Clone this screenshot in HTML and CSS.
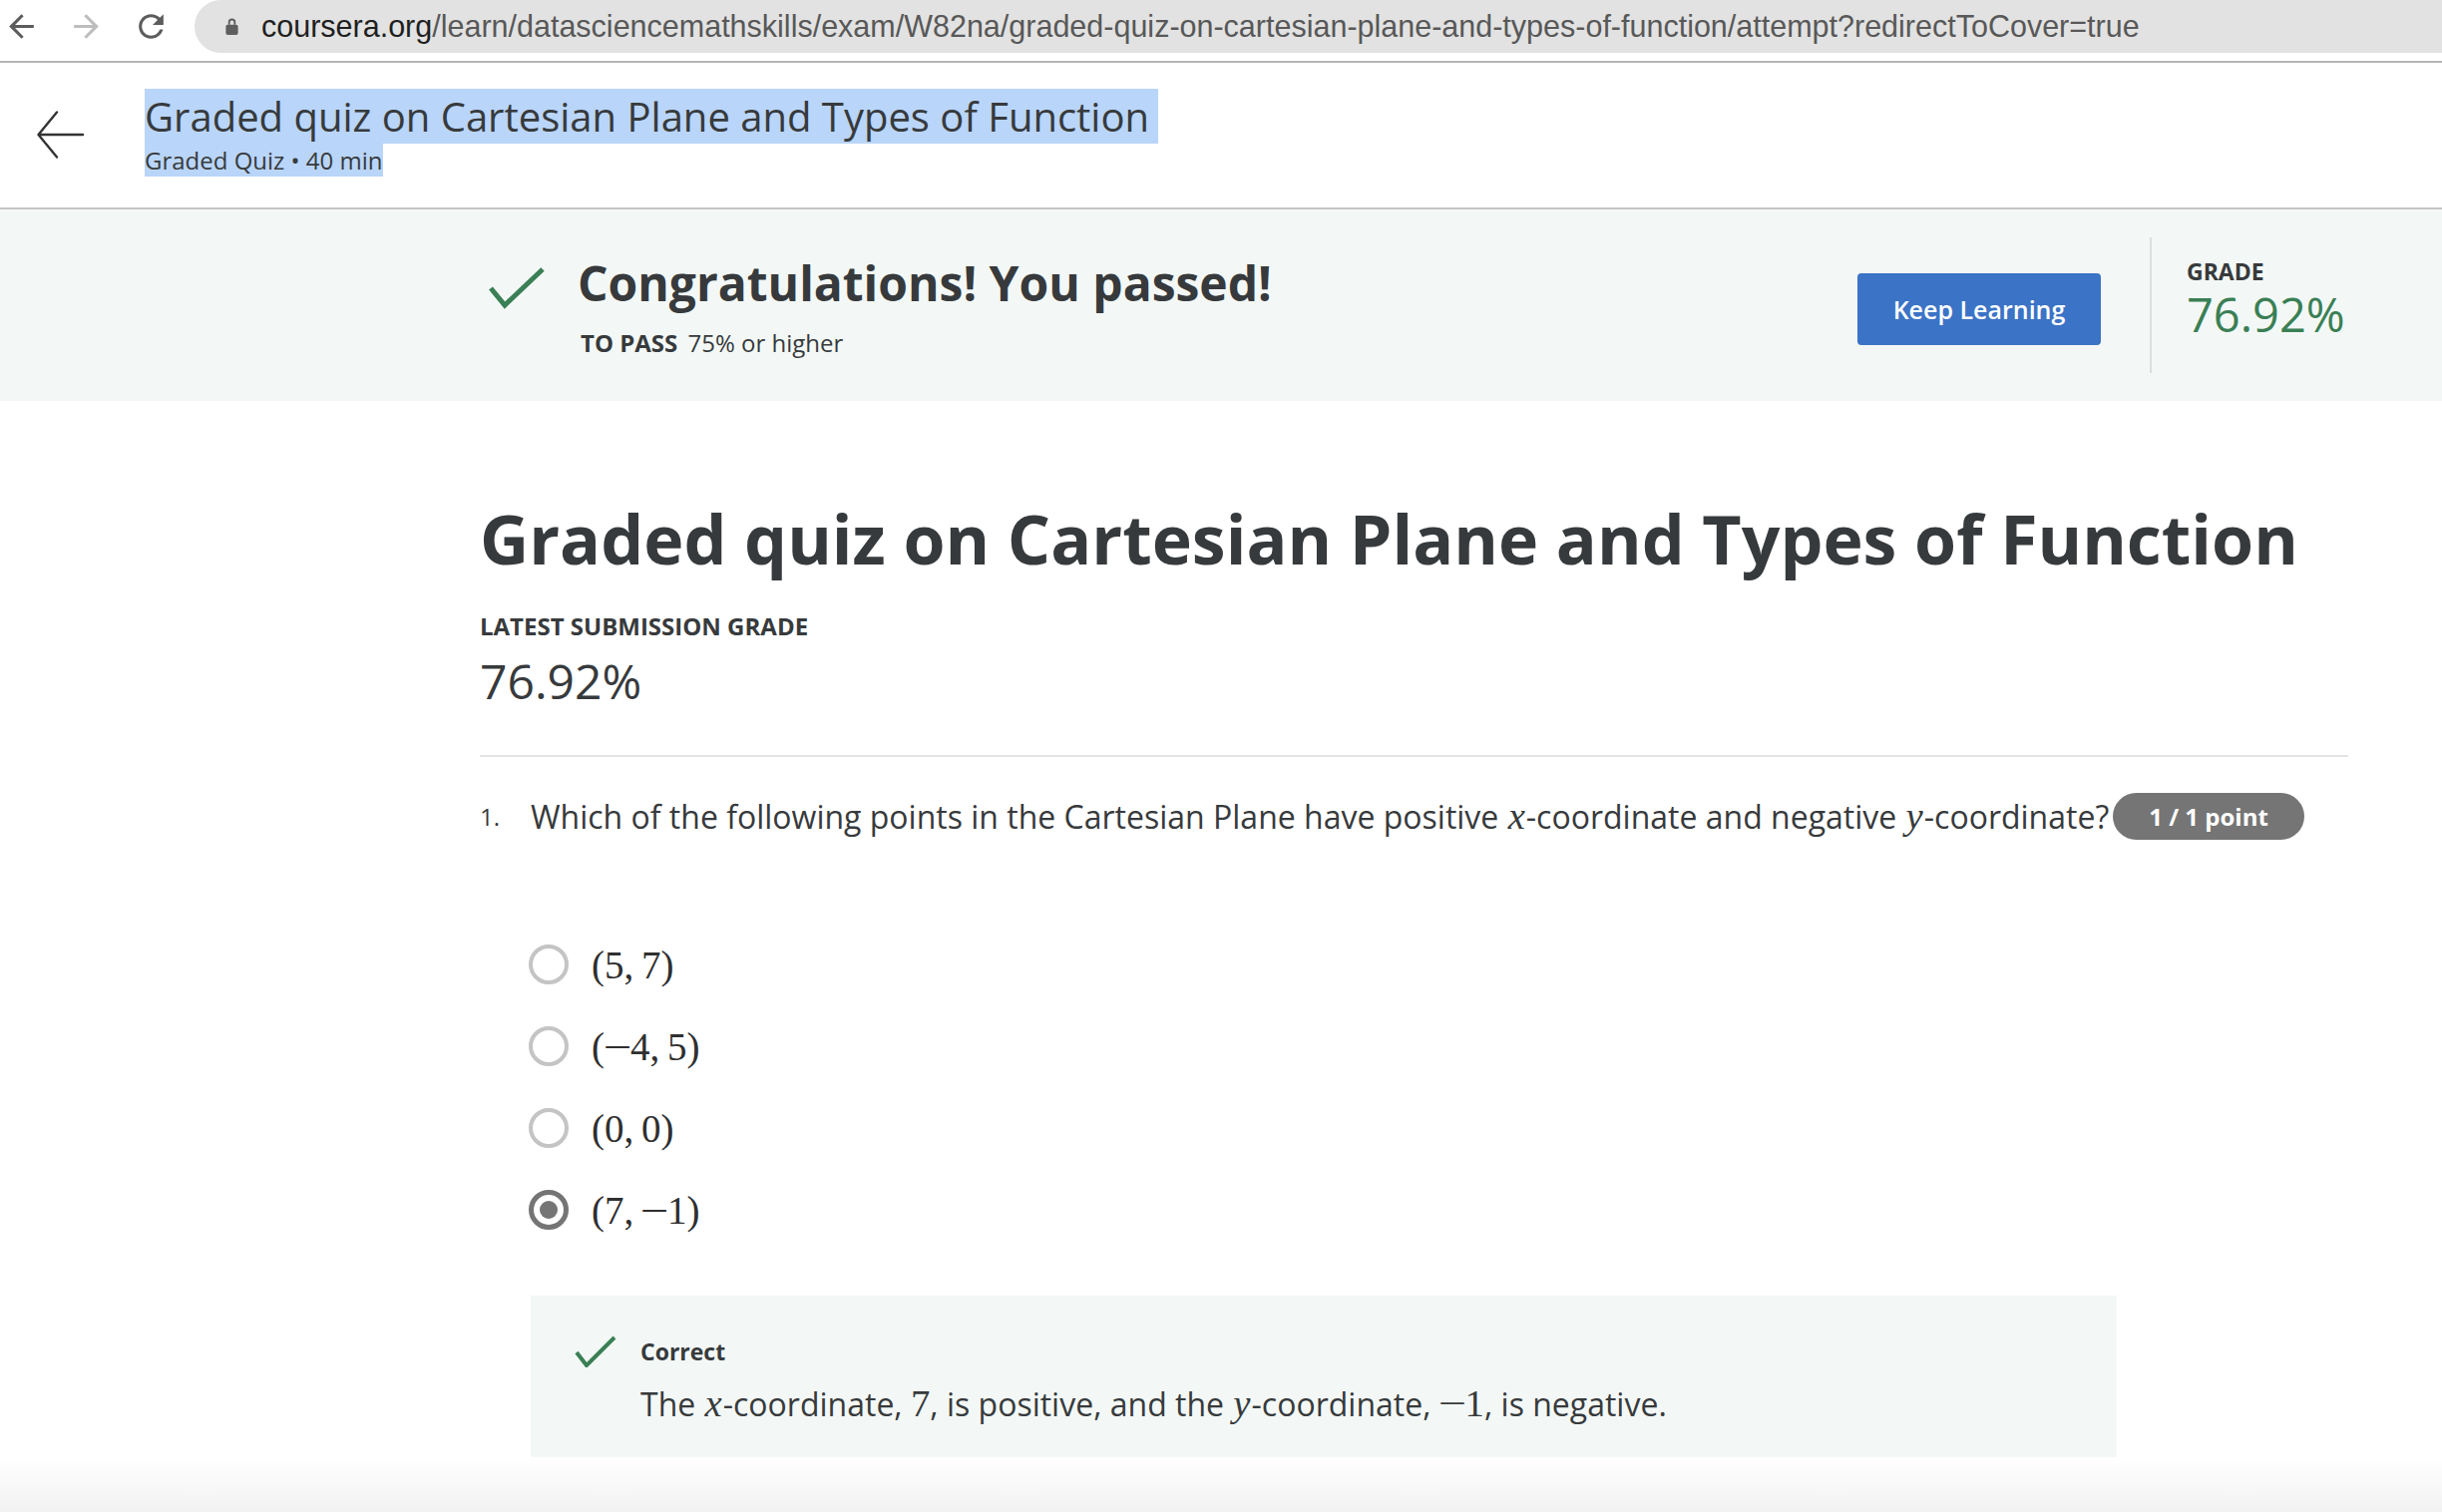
FILE: index.html
```html
<!DOCTYPE html>
<html lang="en">
<head>
<meta charset="utf-8">
<title>Graded quiz on Cartesian Plane and Types of Function | Coursera</title>
<link rel="stylesheet" href="styles.css">
</head>
<body>
<div class="browserbar">
  <div class="nav-icons">
    <svg class="nav-icon dark" viewBox="0 0 24 24"><path d="M20 11H7.83l5.59-5.59L12 4l-8 8 8 8 1.41-1.41L7.83 13H20v-2z"/></svg>
    <svg class="nav-icon light" viewBox="0 0 24 24"><path d="M12 4l-1.41 1.41L16.17 11H4v2h12.17l-5.58 5.59L12 20l8-8z"/></svg>
    <svg class="nav-icon dark" viewBox="0 0 24 24"><path d="M17.65 6.35C16.2 4.9 14.21 4 12 4c-4.42 0-7.99 3.58-7.99 8s3.57 8 7.99 8c3.73 0 6.84-2.55 7.73-6h-2.08c-.82 2.33-3.04 4-5.65 4-3.31 0-6-2.69-6-6s2.69-6 6-6c1.66 0 3.14.69 4.22 1.78L13 11h7V4l-2.35 2.35z"/></svg>
  </div>
  <div class="omnibox">
    <svg class="lock" viewBox="0 0 16 20"><path d="M4 8V5.5a4 4 0 0 1 8 0V8h-2V5.5a2 2 0 0 0-4 0V8z" fill="#5f5f5f"/><rect x="1.5" y="8" width="13" height="11" rx="2" fill="#5f5f5f"/></svg>
    <span class="url"><span class="host">coursera.org</span>/learn/datasciencemathskills/exam/W82na/graded-quiz-on-cartesian-plane-and-types-of-function/attempt?redirectToCover=true</span>
  </div>
</div>

<header class="page-header">
  <svg class="back-arrow" viewBox="0 0 48 48"><path d="M46 24H2M20 1.5L1.5 24 20 46.5" fill="none" stroke="#333" stroke-width="2.4" stroke-linecap="round" stroke-linejoin="round"/></svg>
  <div class="header-text">
    <div class="header-title"><span class="sel sel-title">Graded quiz on Cartesian Plane and Types of Function</span></div>
    <div class="header-sub"><span class="sel">Graded Quiz • 40 min</span></div>
  </div>
</header>

<section class="banner">
  <div class="banner-left">
    <svg class="check-big" viewBox="0 0 58 44"><path d="M3 22L17 39 55 3" fill="none" stroke="#3a7f55" stroke-width="5"/></svg>
    <div class="banner-text">
      <div class="congrats">Congratulations! You passed!</div>
      <div class="topass"><span class="topass-label">TO PASS</span> 75% or higher</div>
    </div>
  </div>
  <button class="keep-btn">Keep Learning</button>
  <div class="banner-divider"></div>
  <div class="grade-col">
    <div class="grade-label">GRADE</div>
    <div class="grade-value">76.92%</div>
  </div>
</section>

<main class="content">
  <h1 class="quiz-title">Graded quiz on Cartesian Plane and Types of Function</h1>
  <div class="latest-label">LATEST SUBMISSION GRADE</div>
  <div class="latest-value">76.92%</div>
  <hr class="divider">

  <div class="question">
    <div class="q-num">1.</div>
    <div class="q-body">Which of the following points in the Cartesian Plane have positive <span class="m mi">x</span>-coordinate and negative <span class="m mi">y</span>-coordinate?<span class="badge">1 / 1 point</span></div>
  </div>

  <ul class="options">
    <li class="option"><span class="radio"></span><span class="m opt">(5,&thinsp;7)</span></li>
    <li class="option"><span class="radio"></span><span class="m opt">(<span class="minus">−</span>4,&thinsp;5)</span></li>
    <li class="option"><span class="radio"></span><span class="m opt">(0,&thinsp;0)</span></li>
    <li class="option"><span class="radio checked"></span><span class="m opt">(7,&thinsp;<span class="minus">−</span>1)</span></li>
  </ul>

  <div class="feedback">
    <svg class="check-small" viewBox="0 0 42 32"><path d="M2 17L12 30 40 2" fill="none" stroke="#3a7f55" stroke-width="4"/></svg>
    <div class="feedback-text">
      <div class="correct">Correct</div>
      <div class="explain">The <span class="m mi">x</span>-coordinate, <span class="m">7</span>, is positive, and the <span class="m mi">y</span>-coordinate, <span class="m"><span class="minus">−</span>1</span>, is negative.</div>
    </div>
  </div>
</main>

<div class="bottom-fade"></div>
</body>
</html>
```

FILE: styles.css
```css
html, body {
  margin: 0;
  padding: 0;
  background: #fff;
  overflow: hidden;
}
body {
  font-family: "Open Sans", "Liberation Sans", sans-serif;
  color: #373a3c;
  height: 1516px;
}

/* browser chrome */
.browserbar {
  height: 61px;
  border-bottom: 2px solid #b5b5b5;
  display: flex;
  align-items: flex-start;
  background: #fff;
}
.nav-icons {
  display: flex;
  align-items: center;
  height: 52px;
  padding-left: 3px;
  gap: 28px;
}
.nav-icon {
  width: 37px;
  height: 37px;
}
.nav-icon.dark { fill: #5c5c5c; }
.nav-icon.light { fill: #bdbdbd; }
.omnibox {
  margin-left: 25px;
  flex: 1;
  height: 53px;
  background: #e2e2e2;
  border-radius: 27px 0 0 27px;
  display: flex;
  align-items: center;
  padding-left: 30px;
}
.lock {
  width: 15px;
  height: 19px;
  margin-right: 22px;
}
.url {
  font-family: "Liberation Sans", Arial, sans-serif;
  font-size: 30.5px;
  color: #585858;
  white-space: nowrap;
}
.url .host { color: #1f1f1f; }

/* page header */
.page-header {
  height: 145px;
  border-bottom: 2px solid #c4c4c4;
  display: flex;
  align-items: flex-start;
}
.back-arrow {
  width: 48px;
  height: 48px;
  margin: 48px 0 0 37px;
}
.header-text {
  margin-left: 60px;
  padding-top: 27px;
}
.header-title {
  font-size: 40px;
  line-height: 53px;
  color: #373a3c;
}
.header-sub {
  font-size: 24px;
  line-height: 36px;
  color: #373a3c;
}
.sel {
  background: #b9d5f9;
}
.sel-title {
  padding-right: 9px;
}

/* result banner */
.banner {
  height: 192px;
  background: #f3f8f6;
  display: flex;
  align-items: center;
}
.banner-left {
  display: flex;
  align-items: flex-start;
  margin-left: 489px;
  padding-top: 3px;
}
.check-big {
  width: 58px;
  height: 44px;
  margin-top: 11px;
}
.banner-text {
  margin-left: 32px;
}
.congrats {
  font-size: 48px;
  font-weight: 700;
  line-height: 56px;
  color: #373a3c;
}
.topass {
  margin-top: 17px;
  margin-left: 3px;
  font-size: 24px;
  line-height: 30px;
  color: #373a3c;
}
.topass-label {
  font-weight: 700;
  margin-right: 4px;
}
.keep-btn {
  margin-left: auto;
  margin-top: 8px;
  width: 244px;
  height: 72px;
  border: none;
  border-radius: 4px;
  background: #3b73c6;
  color: #fff;
  font-family: "Open Sans", sans-serif;
  font-size: 25px;
  font-weight: 600;
  padding: 0;
}
.banner-divider {
  margin-left: 49px;
  width: 2px;
  height: 136px;
  background: #dcdfde;
}
.grade-col {
  margin-left: 35px;
  width: 256px;
  margin-bottom: 10px;
}
.grade-label {
  font-size: 23px;
  font-weight: 700;
  line-height: 28px;
  color: #373a3c;
}
.grade-value {
  font-size: 47px;
  line-height: 58px;
  color: #3a7f55;
}

/* main */
.content {
  margin-left: 481px;
  width: 1873px;
  padding-top: 97px;
}
.quiz-title {
  margin: 0;
  font-size: 68px;
  font-weight: 700;
  line-height: 82px;
  color: #373a3c;
}
.latest-label {
  margin-top: 32px;
  font-size: 24px;
  font-weight: 700;
  line-height: 30px;
}
.latest-value {
  margin-top: 10px;
  font-size: 48px;
  line-height: 60px;
}
.divider {
  margin: 44px 0 0;
  border: none;
  height: 2px;
  background: #e3e3e3;
}

.question {
  display: flex;
  margin-top: 36px;
}
.q-num {
  width: 51px;
  font-size: 24px;
  line-height: 48px;
  flex: none;
}
.q-body {
  font-size: 32px;
  line-height: 48px;
  color: #373a3c;
}
.m {
  font-family: "Liberation Serif", "DejaVu Serif", serif;
  font-size: 1.21em;
  line-height: 1;
}
.mi {
  font-style: italic;
  padding: 0 1px;
}
.minus {
  display: inline-block;
  transform: scaleX(1.3);
  margin: 0 2px;
}
.badge {
  display: inline-block;
  vertical-align: top;
  margin-left: 4px;
  height: 47px;
  line-height: 47px;
  padding: 0 36px;
  border-radius: 24px;
  background: #757575;
  color: #fff;
  font-size: 24px;
  font-weight: 700;
}

.options {
  list-style: none;
  margin: 83px 0 0 49px;
  padding: 0;
}
.option {
  height: 82px;
  display: flex;
  align-items: center;
}
.radio {
  box-sizing: border-box;
  width: 40px;
  height: 40px;
  border-radius: 50%;
  border: 4px solid #c4c4c4;
  flex: none;
  position: relative;
}
.radio.checked {
  border: 5px solid #757575;
}
.radio.checked::after {
  content: "";
  position: absolute;
  left: 6px;
  top: 6px;
  width: 18px;
  height: 18px;
  border-radius: 50%;
  background: #757575;
}
.opt {
  margin-left: 23px;
  font-size: 39px;
  color: #2f2f2f;
}

.feedback {
  margin: 45px 0 0 51px;
  width: 1590px;
  height: 162px;
  box-sizing: border-box;
  background: #f3f8f6;
  display: flex;
  align-items: flex-start;
  padding: 40px 0 0 44px;
}
.check-small {
  width: 42px;
  height: 32px;
  margin-top: 0;
}
.feedback-text {
  margin-left: 24px;
}
.correct {
  font-size: 23px;
  font-weight: 700;
  line-height: 32px;
}
.explain {
  margin-top: 15px;
  font-size: 32px;
  line-height: 44px;
}

.bottom-fade {
  position: fixed;
  left: 0;
  right: 0;
  bottom: 0;
  height: 54px;
  background: linear-gradient(to bottom, rgba(240,240,240,0), rgba(240,240,240,0.9));
  pointer-events: none;
}
```
